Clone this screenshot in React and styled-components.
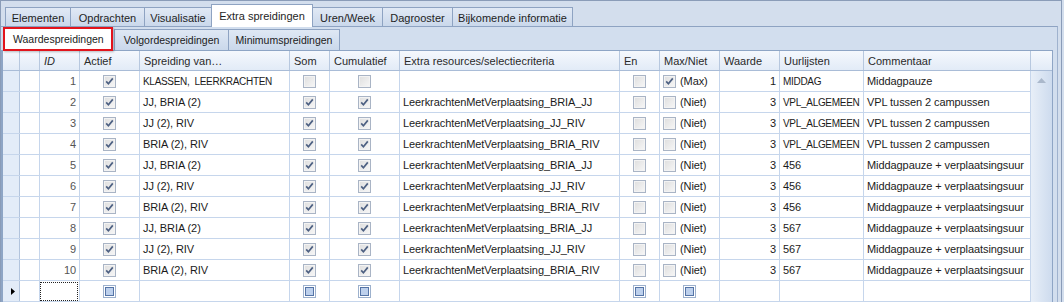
import React from "react";
import styled, { createGlobalStyle } from "styled-components";

const GlobalStyle = createGlobalStyle`
  html, body {
    margin: 0;
    padding: 0;
    background: #d3deed;
  }
  body {
    font-family: "Liberation Sans", Arial, sans-serif;
    font-size: 11px;
    color: #1b1b1b;
  }
`;

const COLS = [17, 20, 40, 60, 150, 40, 70, 220, 40, 60, 60, 84, 167];
const template = COLS.map((w) => `${w}px`).join(" ");

const Frame = styled.div`
  width: 1062px;
  height: 302px;
  box-sizing: border-box;
  border: 1px solid #8a9cb8;
  border-bottom: none;
  background: #d3deed;
  overflow: hidden;
`;

const TabStrip = styled.div`
  display: flex;
  align-items: flex-end;
  height: 25px;
  padding-left: 4px;
`;

const Tab = styled.div`
  width: ${(p) => p.$w}px;
  height: ${(p) => (p.$active ? 23 : 19)}px;
  box-sizing: border-box;
  margin-left: -1px;
  margin-bottom: ${(p) => (p.$active ? -1 : 0)}px;
  border: 1px solid #8ea3c2;
  border-bottom: none;
  background: ${(p) =>
    p.$active ? "#ffffff" : "linear-gradient(#e1e9f5, #cad8eb)"};
  color: #1e1e1e;
  font-size: 11px;
  display: flex;
  align-items: center;
  justify-content: center;
  padding-top: ${(p) => (p.$active ? 0 : 1)}px;
  position: relative;
  z-index: ${(p) => (p.$active ? 2 : 1)};
  &:first-child {
    margin-left: 0;
  }
`;

const Panel = styled.div`
  display: flex;
  flex-direction: column;
  margin-right: 3px;
  border-top: 1px solid #8ea3c2;
  border-right: 1px solid #9fb2ce;
  background: #d2deee;
  height: 300px;
`;

const SubStrip = styled.div`
  display: flex;
  align-items: flex-start;
  height: 23px;
  padding-left: 2px;
`;

const Highlight = styled.div`
  width: 110px;
  height: 24px;
  box-sizing: border-box;
  border: 2px solid #e2141c;
  background: #ffffff;
  display: flex;
  align-items: center;
  padding-left: 8px;
  font-size: 10.5px;
  box-shadow: 1px 1px 2px rgba(0, 0, 0, 0.25);
  position: relative;
  z-index: 2;
`;

const SubTab = styled.div`
  width: ${(p) => p.$w}px;
  height: 21px;
  margin-top: 2px;
  margin-left: -1px;
  box-sizing: border-box;
  border: 1px solid #8ea3c2;
  border-bottom: none;
  background: linear-gradient(#dfe8f4, #cad8eb);
  font-size: 10.5px;
  display: flex;
  align-items: center;
  justify-content: center;
  &:nth-child(2) {
    margin-left: 1px;
  }
`;

const Grid = styled.div`
  margin-right: 4px;
  border-top: 1px solid #8ea5c5;
  border-left: 2px solid #8ea5c5;
  border-right: 1px solid #8ea5c5;
  background: #ffffff;
  flex: 1;
`;

const HeaderRow = styled.div`
  display: grid;
  grid-template-columns: ${template} 21px;
  height: 20px;
  box-sizing: border-box;
  border-bottom: 1px solid #a9bcd7;
  background: linear-gradient(#f5f8fd, #e2ebf7);
`;

const HeadCell = styled.div`
  box-sizing: border-box;
  border-right: 1px solid #b7c8df;
  display: flex;
  align-items: center;
  padding-left: 4px;
  font-size: 11px;
  font-style: ${(p) => (p.$italic ? "italic" : "normal")};
  color: #2a2a2a;
  white-space: nowrap;
  overflow: hidden;
  &:last-child {
    border-right: none;
  }
`;

const Body = styled.div`
  display: flex;
`;

const Rows = styled.div`
  width: 1028px;
`;

const Row = styled.div`
  display: grid;
  grid-template-columns: ${template};
  height: 21px;
  box-sizing: border-box;
  border-bottom: 1px solid #c6d6ec;
`;

const Cell = styled.div`
  box-sizing: border-box;
  border-right: 1px solid #c6d6ec;
  display: flex;
  align-items: center;
  justify-content: ${(p) =>
    p.$align === "right"
      ? "flex-end"
      : p.$align === "center"
      ? "center"
      : "flex-start"};
  padding: 0 3px;
  font-size: ${(p) => (p.$caps ? 10 : 11)}px;
  letter-spacing: ${(p) => (p.$caps ? -0.3 : -0.08)}px;
  color: ${(p) => p.$color || "#1b1b1b"};
  white-space: pre;
  overflow: hidden;
`;

const Indicator = styled(Cell)`
  background: #e3ecf8;
  border-right: 1px solid #b2c4dd;
  padding-left: 8px;
`;

const Scrollbar = styled.div`
  width: 21px;
  height: 231px;
  background: linear-gradient(to right, #e8eff8, #cddbee);
  display: flex;
  justify-content: center;
  padding-top: 7px;
  box-sizing: border-box;
`;

const Box = styled.span`
  width: 13px;
  height: 13px;
  box-sizing: border-box;
  border: 1px solid #a9b4c5;
  background: linear-gradient(135deg, #dedede, #f7f7f7);
  box-shadow: inset 0 0 0 1px #f3f3f3;
  display: inline-flex;
  align-items: center;
  justify-content: center;
  flex: none;
`;

const NewBox = styled.span`
  width: 13px;
  height: 13px;
  box-sizing: border-box;
  border: 1px solid #9db1cd;
  background: #ffffff;
  display: inline-flex;
  align-items: center;
  justify-content: center;
  flex: none;
  &::after {
    content: "";
    width: 7px;
    height: 7px;
    border: 1px solid #5574a6;
    background: #bdd0ec;
  }
`;

const Label = styled.span`
  margin-left: 4px;
`;

const Focus = styled.div`
  position: absolute;
  inset: 1px 1px 0 0;
  border: 1px dotted #222;
`;

const FocusCell = styled(Cell)`
  position: relative;
`;

const Check = ({ on }) => (
  <Box>
    {on && (
      <svg width="11" height="11" viewBox="0 0 11 11">
        <path
          d="M2.2 5.4 L4.4 7.8 L8.8 2.4"
          fill="none"
          stroke="#4d6082"
          strokeWidth="1.7"
        />
      </svg>
    )}
  </Box>
);

const tabs = [
  ["Elementen", 66],
  ["Opdrachten", 75],
  ["Visualisatie", 68],
  ["Extra spreidingen", 102, true],
  ["Uren/Week", 71],
  ["Dagrooster", 71],
  ["Bijkomende informatie", 121],
];

const headers = [
  "",
  "",
  "ID",
  "Actief",
  "Spreiding van…",
  "Som",
  "Cumulatief",
  "Extra resources/selectiecriteria",
  "En",
  "Max/Niet",
  "Waarde",
  "Uurlijsten",
  "Commentaar",
  "",
];

const spreid = ["JJ, BRIA (2)", "JJ (2), RIV", "BRIA (2), RIV"];
const extra = [
  "LeerkrachtenMetVerplaatsing_BRIA_JJ",
  "LeerkrachtenMetVerplaatsing_JJ_RIV",
  "LeerkrachtenMetVerplaatsing_BRIA_RIV",
];

const rows = [
  {
    id: 1,
    spreiding: "KLASSEN,  LEERKRACHTEN",
    som: false,
    cum: false,
    extra: "",
    max: true,
    waarde: 1,
    uur: "MIDDAG",
    comm: "Middagpauze",
  },
];
for (let i = 2; i <= 10; i++) {
  rows.push({
    id: i,
    spreiding: spreid[(i - 2) % 3],
    som: true,
    cum: true,
    extra: extra[(i - 2) % 3],
    max: false,
    waarde: 3,
    uur: i <= 4 ? "VPL_ALGEMEEN" : i <= 7 ? "456" : "567",
    comm: i <= 4 ? "VPL tussen 2 campussen" : "Middagpauze + verplaatsingsuur",
  });
}

const App = () => {
  return (
    <Frame>
      <GlobalStyle />
      <TabStrip>
        {tabs.map(([t, w, a]) => (
          <Tab key={t} $w={w} $active={a}>
            {t}
          </Tab>
        ))}
      </TabStrip>
      <Panel>
        <SubStrip>
          <Highlight>Waardespreidingen</Highlight>
          <SubTab $w={115}>Volgordespreidingen</SubTab>
          <SubTab $w={112}>Minimumspreidingen</SubTab>
        </SubStrip>
        <Grid>
          <HeaderRow>
            {headers.map((h, i) => (
              <HeadCell key={i} $italic={h === "ID"}>
                {h}
              </HeadCell>
            ))}
          </HeaderRow>
          <Body>
            <Rows>
              {rows.map((r) => (
                <Row key={r.id}>
                  <Indicator />
                  <Cell />
                  <Cell $align="right" $color="#555">
                    {r.id}
                  </Cell>
                  <Cell $align="center">
                    <Check on />
                  </Cell>
                  <Cell $caps={r.id === 1}>{r.spreiding}</Cell>
                  <Cell $align="center">
                    <Check on={r.som} />
                  </Cell>
                  <Cell $align="center">
                    <Check on={r.cum} />
                  </Cell>
                  <Cell>{r.extra}</Cell>
                  <Cell $align="center">
                    <Check />
                  </Cell>
                  <Cell>
                    <Check on={r.max} />
                    <Label>{r.max ? "(Max)" : "(Niet)"}</Label>
                  </Cell>
                  <Cell $align="right">{r.waarde}</Cell>
                  <Cell $caps={/[A-Z]/.test(r.uur)}>{r.uur}</Cell>
                  <Cell>{r.comm}</Cell>
                </Row>
              ))}
              <Row>
                <Indicator>
                  <svg width="4" height="7" viewBox="0 0 4 7">
                    <path d="M0 0 L4 3.5 L0 7 Z" fill="#000" />
                  </svg>
                </Indicator>
                <Cell />
                <FocusCell>
                  <Focus />
                </FocusCell>
                <Cell $align="center">
                  <NewBox />
                </Cell>
                <Cell />
                <Cell $align="center">
                  <NewBox />
                </Cell>
                <Cell $align="center">
                  <NewBox />
                </Cell>
                <Cell />
                <Cell $align="center">
                  <NewBox />
                </Cell>
                <Cell $align="center">
                  <NewBox />
                </Cell>
                <Cell />
                <Cell />
                <Cell />
              </Row>
            </Rows>
            <Scrollbar>
              <svg width="9" height="5" viewBox="0 0 9 5">
                <path d="M0 5 L4.5 0 L9 5 Z" fill="#aab8cb" />
              </svg>
            </Scrollbar>
          </Body>
        </Grid>
      </Panel>
    </Frame>
  );
};

export default App;
